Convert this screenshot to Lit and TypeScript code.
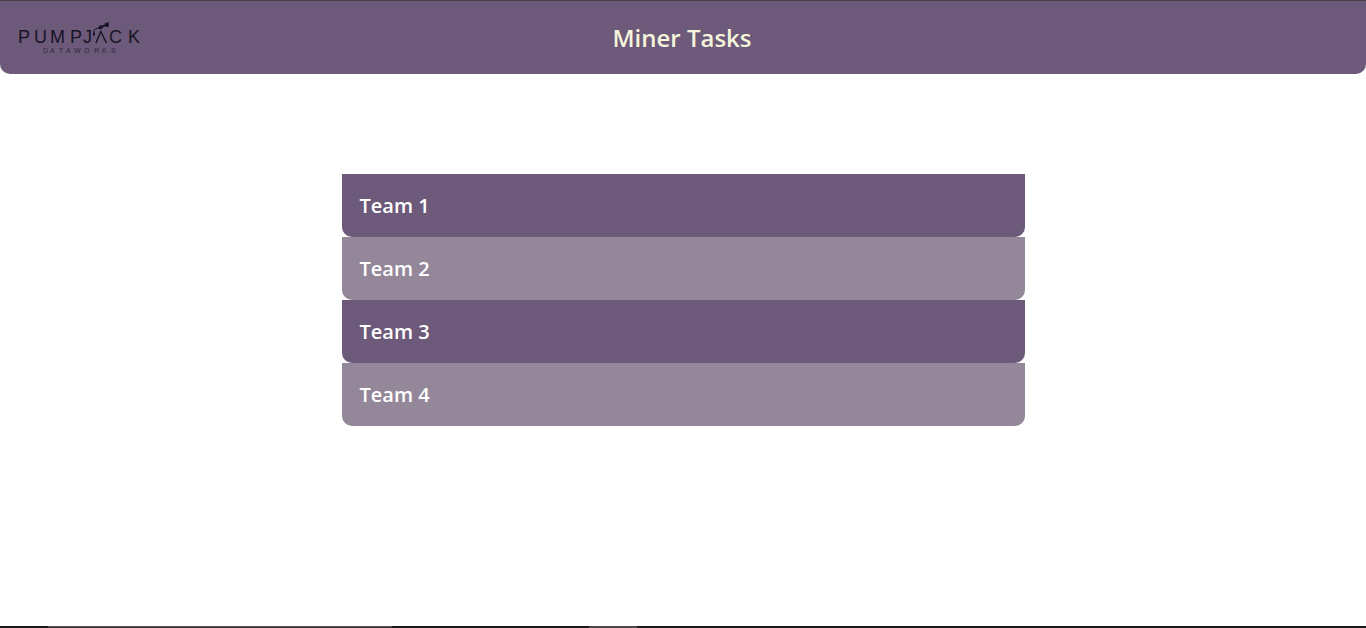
import { LitElement, html, css } from "lit";
import { customElement, property, state } from "lit/decorators.js";

@customElement("pumpjack-logo")
export class PumpjackLogo extends LitElement {
  static styles = css`
    :host {
      display: block;
      width: 124px;
      height: 36px;
    }
    .logo {
      display: block;
      width: 100%;
      height: 100%;
      overflow: visible;
      font-family: "Liberation Sans", Arial, sans-serif;
      fill: #171524;
    }
    .name {
      font-size: 18px;
    }
    .sub {
      font-size: 7px;
      fill: #30283f;
    }
    .line {
      fill: none;
      stroke: #171524;
    }
  `;

  render() {
    return html`
      <svg class="logo" viewBox="0 0 124 36" role="img" aria-label="Pumpjack Dataworks">
        <text class="name" y="23" x="0 16 32 52 65">PUMPJ</text>
        <text class="name" y="23" x="91 110">CK</text>
        <path class="line" stroke-width="1.5" d="M78 23 L82.8 11.5 L88.4 23" />
        <path class="line" stroke-width="1" d="M76 14 V10.5 Q76 9.4 77.5 9 L88 5" />
        <path class="line" stroke-width="1.8" d="M80.5 8 L88.5 4.8" />
        <circle cx="82.8" cy="7.2" r="2" />
        <path d="M86.5 3.4 L90.6 2 L91 6.6 L87.8 7 Z" />
        <path d="M75 12.4 H77 V15.4 H75 Z" />
        <text class="sub" y="33" x="25 32 41 48 56 66 76 84 93">DATAWORKS</text>
      </svg>
    `;
  }
}

@customElement("app-header")
export class AppHeader extends LitElement {
  @property() heading = "";

  static styles = css`
    :host {
      display: block;
    }
    .bar {
      box-sizing: border-box;
      display: grid;
      grid-template-columns: 1fr auto 1fr;
      align-items: center;
      min-height: 74px;
      padding: 0 20px 0 18px;
      border-top: 1px solid #444045;
      border-radius: 0 0 10px 10px;
      background: #6d597a;
    }
    .title {
      margin: 0;
      font-size: 24px;
      line-height: 32px;
      font-weight: 600;
      color: beige;
    }
  `;

  render() {
    return html`
      <header class="bar">
        <pumpjack-logo></pumpjack-logo>
        <h1 class="title">${this.heading}</h1>
      </header>
    `;
  }
}

@customElement("app-root")
export class AppRoot extends LitElement {
  @state() private teams = ["Team 1", "Team 2", "Team 3", "Team 4"];

  static styles = css`
    :host {
      display: flex;
      flex-direction: column;
      min-height: 100vh;
      background: #fff;
      font-family: "Open Sans", "Noto Sans", sans-serif;
    }
    .content {
      flex: 1;
      padding-top: 100px;
    }
    .teams {
      width: 50%;
      margin: 0 auto;
      padding: 0;
      list-style: none;
    }
    .team {
      display: block;
      box-sizing: border-box;
      width: 100%;
      padding: 18px;
      border: 0;
      border-radius: 0 0 10px 10px;
      background: #6d597a;
      color: #fff;
      font: inherit;
      font-size: 20px;
      line-height: 27px;
      font-weight: 600;
      text-align: left;
      cursor: pointer;
    }
    .item:nth-child(even) .team {
      background: #95879a;
    }
    .strip {
      display: grid;
      grid-template-columns: 48fr 344fr 197fr 48fr 729fr;
      height: 2px;
      background: #1c191b;
    }
    .search {
      grid-column: 2;
      background: #353133;
      border-top: 1px solid #5b5759;
    }
    .active {
      grid-column: 4;
      background: #4b4749;
    }
  `;

  render() {
    return html`
      <app-header heading="Miner Tasks"></app-header>
      <main class="content">
        <ul class="teams">
          ${this.teams.map(
            (team) => html`<li class="item"><button class="team" type="button">${team}</button></li>`
          )}
        </ul>
      </main>
      <div class="strip" aria-hidden="true">
        <span class="search"></span>
        <span class="active"></span>
      </div>
    `;
  }
}
